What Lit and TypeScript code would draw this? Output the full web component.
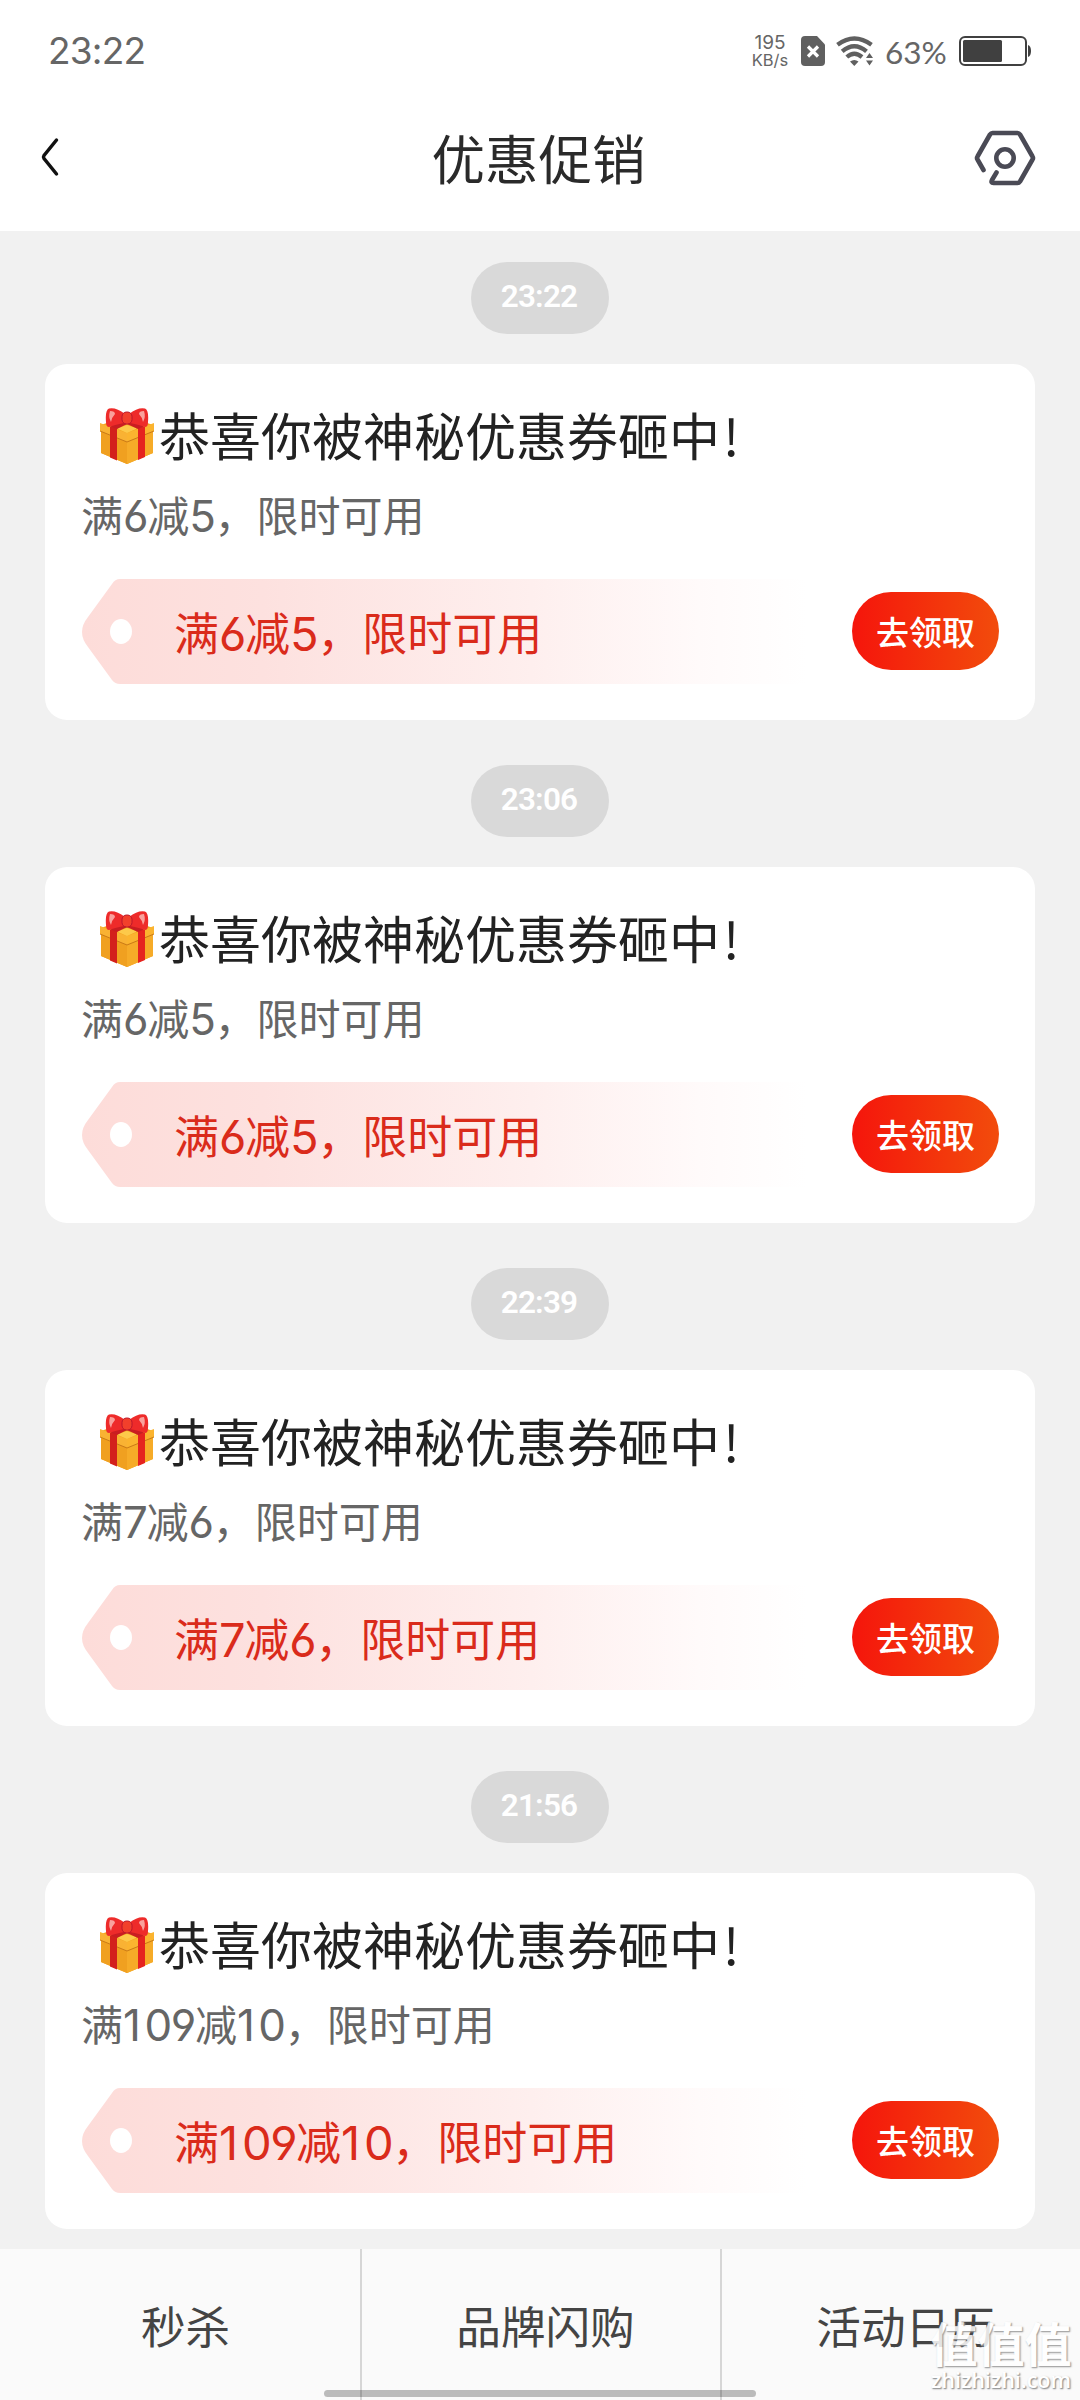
import { LitElement, html, css, svg } from "lit";
import { customElement, property } from "lit/decorators.js";

/** Wraps digits so they take the Latin numeral style; the narrow "1" gets extra room after it. */
const withDigits = (text: string) =>
  text.split(/(1|[02-9]+)/).map((p) => (/^\d+$/.test(p) ? html`<span class="num ${p === "1" ? "one" : ""}">${p}</span>` : p));

const giftIcon = svg`
  <path d="M1 17 L27 8 L53 17 L53 45 L27 56 L1 45Z" fill="#f2a21f"/>
  <path d="M1 24 L27 34 L27 56 L1 45Z" fill="#f0a020"/>
  <path d="M53 24 L27 34 L27 56 L53 45Z" fill="#f6ab28"/>
  <path d="M0 15 L27 25 L27 34 L0 23Z" fill="#f9b233"/>
  <path d="M54 15 L27 25 L27 34 L54 23Z" fill="#fbb42f"/>
  <path d="M0 23 L27 34 L54 23" fill="none" stroke="#c97a17" stroke-width="1"/>
  <path d="M18 20 L27 17 L36 20 L36 21 L27 25 L18 21Z" fill="#fdc94a"/>
  <path d="M10 19 L17 19 L17 52.500 L10 49.500Z" fill="#d3201c"/>
  <path d="M38 19 L45 19 L45 49 L38 52Z" fill="#e5231f"/>
  <path d="M9 18 L27 12 L45 18 L38 21 L27 16 L17 21Z" fill="#c91d22"/>
  <path d="M25 6 Q16 -1 9 .5 Q5 2 6 14 Q6 19 9 19 Q14 17 24 15Z" fill="#ee2b2a"/>
  <path d="M29 6 Q38 -1 45 .5 Q49 2 48 14 Q48 19 45 19 Q40 17 30 15Z" fill="#ee2b2a"/>
  <path d="M10 3 Q15 3 15 6 Q12 9 11 14 Q8 9 10 3Z M44 3 Q39 3 39 6 Q42 9 43 14 Q46 9 44 3Z" fill="#f9a19c"/>
  <rect x="22" y="4" width="10" height="12" rx="4.500" fill="#f2402b" stroke="#b8162c" stroke-width="1"/>`;

@customElement("coupon-card")
class CouponCard extends LitElement {
  @property() offer = "";

  static styles = css`
    :host { display: block; }
    .card {
      height: 356px; box-sizing: border-box; background: #fff; border-radius: 22px;
      padding: 34px 36px 0 37px; display: flex; flex-direction: column;
    }
    .title { display: flex; align-items: center; height: 72px; padding-left: 18px; font-size: 51px; line-height: 72px; color: #222; white-space: nowrap; }
    .gift { width: 54px; height: 57px; flex: none; margin: 4px 5px 0 0; }
    .bang { margin-left: 3px; }
    .sub { height: 60px; line-height: 60px; margin: 14px 0 0 -1px; font-size: 42px; color: #666; white-space: nowrap; }
    .row { display: flex; align-items: center; justify-content: space-between; height: 106px; margin-top: 34px; }
    .coupon { display: flex; align-items: center; width: 725px; height: 106px; position: relative; }
    .shape { position: absolute; left: 0; top: 1px; width: 725px; height: 106px; }
    .label { position: relative; padding: 3px 0 0 92px; font-size: 45px; line-height: 64px; color: #da2b1b; white-space: nowrap; }
    .btn {
      width: 147px; height: 78px; border: 0; border-radius: 39px; padding: 0; font: 500 33px/76px "Noto Sans CJK SC", sans-serif;
      color: #fff; background: linear-gradient(90deg, #f5150c, #f24c0c); white-space: nowrap; flex: none;
    }
    .num { font-family: Inter, sans-serif; font-size: 1.045em; letter-spacing: -0.03em; font-feature-settings: "cv03", "cv04"; }
    .one { letter-spacing: 0.08em; }
  `;

  render() {
    return html`<article class="card">
      <div class="title"><svg class="gift" viewBox="0 0 54 57">${giftIcon}</svg><span>恭喜你被神秘优惠券砸中<span class="bang">!</span></span></div>
      <div class="sub">${withDigits(this.offer)}</div>
      <div class="row">
        <div class="coupon">
          <svg class="shape" viewBox="0 0 725 106">
            <defs><linearGradient id="fade">
              <stop offset="0" stop-color="#fddcd9"/><stop offset=".25" stop-color="#fde1df"/>
              <stop offset=".62" stop-color="#feefee"/><stop offset=".85" stop-color="#fffafa"/><stop offset="1" stop-color="#fff"/>
            </linearGradient></defs>
            <path d="M725 0 H38 Q33 0 30 5 L6 38 Q-6 53 6 68 L30 101 Q33 105 38 105 H725Z" fill="url(#fade)"/>
            <ellipse cx="39" cy="52.500" rx="11" ry="12.500" fill="#fff"/>
          </svg>
          <span class="label">${withDigits(this.offer)}</span>
        </div>
        <button class="btn">去领取</button>
      </div>
    </article>`;
  }
}

@customElement("status-bar")
class StatusBar extends LitElement {
  static styles = css`
    :host { display: block; }
    .bar { height: 102px; box-sizing: border-box; padding: 0 48px 0 48px; display: flex; align-items: center; color: #666; font-family: Inter, sans-serif; }
    .time { font-size: 37px; line-height: 44px; flex: 1; letter-spacing: -0.8px; }
    .speed { display: flex; flex-direction: column; align-items: center; width: 38px; font-size: 19px; line-height: 18px; }
    .unit { font-size: 16.500px; line-height: 16px; }
    .sim { width: 24px; height: 30px; margin-left: 12px; }
    .wifi { width: 38px; height: 30px; margin-left: 11px; }
    .pct { font-family: Lato, sans-serif; font-size: 31.500px; line-height: 40px; margin-left: 11px; width: 63px; padding-top: 1px; white-space: nowrap; }
    .battery { width: 73px; height: 30px; margin-left: 11px; }
  `;

  render() {
    return html`<div class="bar">
      <span class="time">23:22</span>
      <div class="speed"><span>195</span><span class="unit">KB/s</span></div>
      <svg class="sim" viewBox="0 0 24 30">
        <path d="M4 0 H16 L24 8.500 V26 Q24 30 20 30 H4 Q0 30 0 26 V4 Q0 0 4 0Z" fill="#606060"/>
        <path d="M7 10.500 L17 20.500 M17 10.500 L7 20.500" stroke="#fff" stroke-width="3.200"/>
      </svg>
      <svg class="wifi" viewBox="0 0 38 30">
        <g fill="none" stroke="#606060" stroke-width="4.300">
          <path d="M1.500 8.800 Q18.300 -3.800 35.500 8.800"/><path d="M6.200 15.300 Q18.300 5 30.500 15.300"/><path d="M10.800 21 Q18.300 14.500 26 21"/>
        </g>
        <path d="M14 25.500 Q18.300 22.500 22.500 25.500 L18.300 30Z M30 22 L33.500 17 L37 22Z M30 24.500 L33.500 29.500 L37 24.500Z" fill="#606060"/>
      </svg>
      <span class="pct">63%</span>
      <svg class="battery" viewBox="0 0 73 30">
        <rect x="1" y="1" width="66" height="28" rx="5" fill="#fff" stroke="#404040" stroke-width="2"/>
        <rect x="4" y="4" width="39" height="22" rx="1.500" fill="#404040"/>
        <path d="M69 9 Q72 10 72 15 Q72 20 69 21Z" fill="#404040"/>
      </svg>
    </div>`;
  }
}

@customElement("app-root")
class AppRoot extends LitElement {
  private messages = [
    { time: "23:22", offer: "满6减5，限时可用" },
    { time: "23:06", offer: "满6减5，限时可用" },
    { time: "22:39", offer: "满7减6，限时可用" },
    { time: "21:56", offer: "满109减10，限时可用" },
  ];
  private tabs = ["秒杀", "品牌闪购", "活动日历"];

  static styles = css`
    :host { display: block; }
    .page { position: relative; width: 1080px; height: 2400px; overflow: hidden; display: flex; flex-direction: column; background: #f1f1f1; font-family: "Noto Sans CJK SC", sans-serif; }
    .top { background: #fff; height: 231px; flex: none; }
    .nav { height: 110px; display: grid; grid-template-columns: 1fr auto 1fr; align-items: center; padding: 0 43px 0 40px; }
    .back { width: 20px; height: 40px; }
    .heading { margin: 0; font-size: 53.500px; line-height: 80px; font-weight: 400; color: #2a2a2a; }
    .service { width: 62px; height: 56px; justify-self: end; margin: 2px 1px 0 0; }
    .list { flex: 1; min-height: 0; padding: 31px 45px 0; }
    .entry { display: flex; flex-direction: column; gap: 30px; margin-bottom: 45px; }
    .pill { align-self: center; height: 72px; line-height: 69px; padding: 0 32px 0 30px; border-radius: 36px; background: #d9d9d9; color: #fff; font-family: Roboto, sans-serif; font-weight: 600; font-size: 31.500px; letter-spacing: -0.8px; }
    .tabs { flex: none; height: 151px; display: grid; grid-template-columns: repeat(3, 1fr); background: #fafafa; }
    .tab { padding-left: 9px; font-size: 44.600px; line-height: 151px; text-align: center; color: #444; border-left: 2px solid #d6d6d6; }
    .tab:first-child { border-left-color: transparent; }
    .home { position: absolute; left: 324px; top: 2390px; width: 432px; height: 7px; border-radius: 4px; background: rgba(0, 0, 0, 0.25); }
    .mark { position: absolute; right: 8px; top: 2317px; width: 142px; display: flex; flex-direction: column; align-items: center; color: #fff; white-space: nowrap; text-shadow: 1px 1px 1px #999, 1px 1px 2px #aaa; }
    .glyphs { font-size: 47px; line-height: 50px; font-weight: 700; opacity: 0.85; }
    .site { font-family: "Open Sans", sans-serif; font-weight: 600; font-size: 21.500px; line-height: 26px; }
  `;

  render() {
    return html`<main class="page">
      <header class="top">
        <status-bar></status-bar>
        <div class="nav">
          <svg class="back" viewBox="0 0 20 40"><path d="M16.500 3 L4 18.500 Q3 20 4 21.500 L16.500 37" fill="none" stroke="#111" stroke-width="3.500" stroke-linecap="round"/></svg>
          <h1 class="heading">优惠促销</h1>
          <svg class="service" viewBox="0 0 62 56" fill="none" stroke="#4a4a55" stroke-width="4.600" stroke-linecap="round" stroke-linejoin="round">
            <path d="M9.500 40 L3.500 29.500 Q2.500 28 3.500 26.500 L16 4.500 Q17 3 18.500 3 H43.500 Q45 3 46 4.500 L58.500 26.500 Q59.500 28 58.500 29.500 L46 51.500 Q45 53 43.500 53 H19.500 Q16.500 53 18 50 L22.500 42.500"/>
            <circle cx="31" cy="28" r="8.700"/>
          </svg>
        </div>
      </header>
      <section class="list">
        ${this.messages.map((m) => html`<div class="entry"><time class="pill">${m.time}</time><coupon-card .offer=${m.offer}></coupon-card></div>`)}
      </section>
      <nav class="tabs">${this.tabs.map((t) => html`<div class="tab">${t}</div>`)}</nav>
      <div class="home"></div>
      <div class="mark"><span class="glyphs">值值值</span><span class="site">zhizhizhi.com</span></div>
    </main>`;
  }
}
